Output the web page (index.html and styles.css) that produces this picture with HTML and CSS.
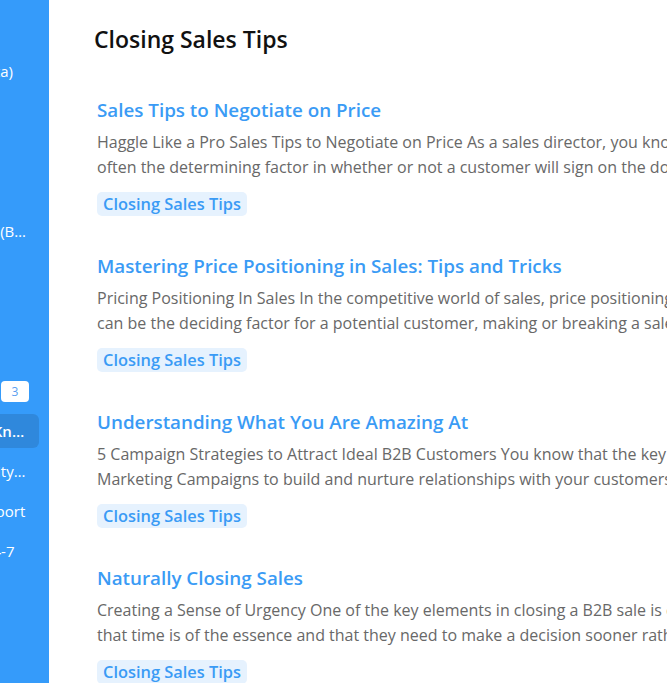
FILE: index.html
```html
<!DOCTYPE html>
<html lang="en">
<head>
<meta charset="utf-8">
<title>Closing Sales Tips</title>
<link rel="stylesheet" href="styles.css">
</head>
<body>
<div class="layout">
  <aside class="sidebar">
    <nav class="nav">
      <a class="nav-item"><span class="label">Sales Book (Beta)</span></a>
      <a class="nav-item"><span class="label">Home</span></a>
      <a class="nav-item"><span class="label">Articles</span></a>
      <a class="nav-item"><span class="label">Templates</span></a>
      <a class="nav-item"><span class="label">Account Based (B2B Sales)</span></a>
      <a class="nav-item"><span class="label">Courses</span></a>
      <a class="nav-item"><span class="label">Webinars</span></a>
      <a class="nav-item"><span class="label">Community</span></a>
      <a class="nav-item"><span class="label">Notifications</span><span class="badge">3</span></a>
      <a class="nav-item active"><span class="label">Closing Deals Knowledge</span></a>
      <a class="nav-item"><span class="label">Lead Productivity Tools</span></a>
      <a class="nav-item"><span class="label">Enterprise Support</span></a>
      <a class="nav-item"><span class="label">Open hours: 24-7</span></a>
    </nav>
  </aside>
  <main class="main">
    <h1 class="page-title">Closing Sales Tips</h1>
    <div class="articles">
      <article class="article">
        <h2 class="article-title">Sales Tips to Negotiate on Price</h2>
        <p class="excerpt"><span class="line">Haggle Like a Pro Sales Tips to Negotiate on Price As a sales director, you know that price is</span><span class="line">often the determining factor in whether or not a customer will sign on the dotted line.</span></p>
        <span class="tag">Closing Sales Tips</span>
      </article>
      <article class="article">
        <h2 class="article-title">Mastering Price Positioning in Sales: Tips and Tricks</h2>
        <p class="excerpt"><span class="line">Pricing Positioning In Sales In the competitive world of sales, price positioning</span><span class="line">can be the deciding factor for a potential customer, making or breaking a sale.</span></p>
        <span class="tag">Closing Sales Tips</span>
      </article>
      <article class="article">
        <h2 class="article-title">Understanding What You Are Amazing At</h2>
        <p class="excerpt"><span class="line">5 Campaign Strategies to Attract Ideal B2B Customers You know that the key to success is</span><span class="line">Marketing Campaigns to build and nurture relationships with your customers.</span></p>
        <span class="tag">Closing Sales Tips</span>
      </article>
      <article class="article">
        <h2 class="article-title">Naturally Closing Sales</h2>
        <p class="excerpt"><span class="line">Creating a Sense of Urgency One of the key elements in closing a B2B sale is convincing the buyer</span><span class="line">that time is of the essence and that they need to make a decision sooner rather than later.</span></p>
        <span class="tag">Closing Sales Tips</span>
      </article>
    </div>
  </main>
</div>
</body>
</html>
```

FILE: styles.css
```css
html, body {
  margin: 0;
  padding: 0;
  height: 100%;
  overflow: hidden;
}
body {
  font-family: "Open Sans", "Liberation Sans", sans-serif;
  background: #ffffff;
  color: #111111;
}
.layout {
  display: flex;
  height: 100vh;
}
.sidebar {
  flex: 0 0 49px;
  width: 49px;
  background: #359bfa;
  overflow: hidden;
  display: flex;
  justify-content: flex-end;
}
.nav {
  flex: 0 0 170px;
  width: 170px;
  padding: 54px 10px 0 0;
  box-sizing: border-box;
  display: flex;
  flex-direction: column;
  gap: 6px;
}
.nav-item {
  height: 34px;
  display: flex;
  align-items: center;
  gap: 8px;
  padding: 0 11px 0 14px;
  border-radius: 6px;
  color: #ffffff;
  font-size: 15px;
  white-space: nowrap;
}
.nav-item .label {
  flex: 1 1 auto;
  min-width: 0;
  overflow: hidden;
  text-overflow: ellipsis;
}
.nav-item.active {
  background: #2f88dc;
  font-weight: 600;
}
.badge {
  flex: 0 0 auto;
  box-sizing: border-box;
  width: 28px;
  height: 21px;
  background: #ffffff;
  color: #5a9ef0;
  font-size: 12px;
  line-height: 21px;
  text-align: center;
  border-radius: 4px;
  margin-right: -1px;
}
.main {
  flex: 0 0 1100px;
  padding: 24px 0 0 45px;
  box-sizing: border-box;
}
.page-title {
  margin: 0;
  font-size: 23px;
  line-height: 31px;
  font-weight: 600;
  color: #111111;
}
.articles {
  margin-top: 41px;
  padding-left: 3px;
  display: flex;
  flex-direction: column;
  gap: 36px;
}
.article {
  display: flex;
  flex-direction: column;
  align-items: flex-start;
}
.article-title {
  margin: 0;
  font-size: 18.8px;
  line-height: 28px;
  font-weight: 600;
  color: #3a9bf5;
}
.excerpt {
  margin: 6px 0 0;
  font-size: 16px;
  line-height: 25px;
  color: #686868;
}
.excerpt .line {
  display: block;
  white-space: nowrap;
}
.tag {
  margin-top: 12px;
  height: 24px;
  line-height: 24px;
  padding: 0 6px;
  border-radius: 5px;
  background: #e6f2fe;
  color: #3a9bf5;
  font-size: 16.4px;
  font-weight: 600;
}
```
